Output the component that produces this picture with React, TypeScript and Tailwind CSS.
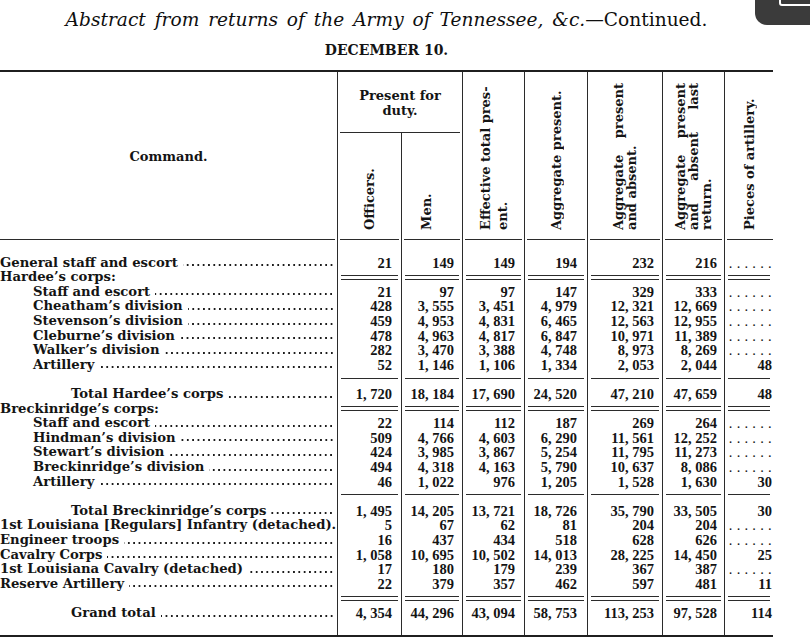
type Row =
  | { kind: "data"; label: string; indent: 0 | 1 | 2; v: (string | null)[]; dots?: boolean }
  | { kind: "group"; label: string }
  | { kind: "rule"; double?: boolean };

const COLS = "grid grid-cols-[338px_64px_61px_62px_63px_75px_62px_48px]";
const LINE = "border-[#2b2b2b]";
const PR = ["pr-[9px]", "pr-[8px]", "pr-[9px]", "pr-[10px]", "pr-[8px]", "pr-[7px]", "pr-px"];
const INDENT = ["pl-0", "pl-[33px]", "pl-[71px]"];

const rows: Row[] = [
  { kind: "data", label: "General staff and escort", indent: 0, v: ["21", "149", "149", "194", "232", "216", null] },
  { kind: "group", label: "Hardee’s corps:" },
  { kind: "data", label: "Staff and escort", indent: 1, v: ["21", "97", "97", "147", "329", "333", null] },
  { kind: "data", label: "Cheatham’s division", indent: 1, v: ["428", "3,555", "3,451", "4,979", "12,321", "12,669", null] },
  { kind: "data", label: "Stevenson’s division", indent: 1, v: ["459", "4,953", "4,831", "6,465", "12,563", "12,955", null] },
  { kind: "data", label: "Cleburne’s division", indent: 1, v: ["478", "4,963", "4,817", "6,847", "10,971", "11,389", null] },
  { kind: "data", label: "Walker’s division", indent: 1, v: ["282", "3,470", "3,388", "4,748", "8,973", "8,269", null] },
  { kind: "data", label: "Artillery", indent: 1, v: ["52", "1,146", "1,106", "1,334", "2,053", "2,044", "48"] },
  { kind: "rule" },
  { kind: "data", label: "Total Hardee’s corps", indent: 2, v: ["1,720", "18,184", "17,690", "24,520", "47,210", "47,659", "48"] },
  { kind: "group", label: "Breckinridge’s corps:" },
  { kind: "data", label: "Staff and escort", indent: 1, v: ["22", "114", "112", "187", "269", "264", null] },
  { kind: "data", label: "Hindman’s division", indent: 1, v: ["509", "4,766", "4,603", "6,290", "11,561", "12,252", null] },
  { kind: "data", label: "Stewart’s division", indent: 1, v: ["424", "3,985", "3,867", "5,254", "11,795", "11,273", null] },
  { kind: "data", label: "Breckinridge’s division", indent: 1, v: ["494", "4,318", "4,163", "5,790", "10,637", "8,086", null] },
  { kind: "data", label: "Artillery", indent: 1, v: ["46", "1,022", "976", "1,205", "1,528", "1,630", "30"] },
  { kind: "rule" },
  { kind: "data", label: "Total Breckinridge’s corps", indent: 2, v: ["1,495", "14,205", "13,721", "18,726", "35,790", "33,505", "30"] },
  { kind: "data", label: "1st Louisiana [Regulars] Infantry (detached).", indent: 0, dots: false, v: ["5", "67", "62", "81", "204", "204", null] },
  { kind: "data", label: "Engineer troops", indent: 0, v: ["16", "437", "434", "518", "628", "626", null] },
  { kind: "data", label: "Cavalry Corps", indent: 0, v: ["1,058", "10,695", "10,502", "14,013", "28,225", "14,450", "25"] },
  { kind: "data", label: "1st Louisiana Cavalry (detached)", indent: 0, v: ["17", "180", "179", "239", "367", "387", null] },
  { kind: "data", label: "Reserve Artillery", indent: 0, v: ["22", "379", "357", "462", "597", "481", "11"] },
  { kind: "rule", double: true },
  { kind: "data", label: "Grand total", indent: 2, v: ["4,354", "44,296", "43,094", "58,753", "113,253", "97,528", "114"] },
];

function Spacer({ h }: { h: string }) {
  return (
    <div className={`${COLS} ${h}`}>
      {[0, 1, 2, 3, 4, 5, 6, 7].map((i) => (
        <div key={i} className={i < 7 ? `border-r ${LINE}` : ""} />
      ))}
    </div>
  );
}

function RuleCells({ double }: { double?: boolean }) {
  return (
    <>
      {[0, 1, 2, 3, 4, 5, 6].map((i) => (
        <div key={i} className={`flex items-center pb-[1px] ${i < 6 ? `border-r ${LINE}` : ""}`}>
          {double ? (
            <div className={`mx-[3px] h-[5px] flex-1 border-y ${LINE}`} />
          ) : (
            <div className="mx-[3px] mb-[2px] h-px flex-1 bg-[#2b2b2b]" />
          )}
        </div>
      ))}
    </>
  );
}

function TableRow({ r }: { r: Row }) {
  if (r.kind === "rule") {
    return (
      <div className={`${COLS} h-[14.6px]`}>
        <div className={`border-r ${LINE}`} />
        <RuleCells double={r.double} />
      </div>
    );
  }
  if (r.kind === "group") {
    return (
      <div className={`${COLS} h-[14.6px] leading-[14.6px]`}>
        <div className={`border-r ${LINE} whitespace-nowrap`}>{r.label}</div>
        <RuleCells double />
      </div>
    );
  }
  return (
    <div className={`${COLS} h-[14.6px] leading-[14.6px]`}>
      <div className={`flex border-r ${LINE} pr-[3px] ${INDENT[r.indent]}`}>
        <span className="whitespace-nowrap">{r.label}</span>
        {r.dots !== false && (
          <span className="ml-[5px] flex-1 bg-[radial-gradient(circle,#1c1c1c_0.85px,transparent_1.25px)] bg-[length:5.33px_4px] bg-[position:right_0_bottom_3px] bg-repeat-x" />
        )}
      </div>
      {r.v.map((v, i) => (
        <div
          key={i}
          className={`text-right font-['Liberation_Serif',serif] text-[14.5px] font-bold ${PR[i]} ${i < 6 ? `border-r ${LINE}` : ""}`}
        >
          {v === null ? (
            <span className="font-normal tracking-[0.3px]">. . . . . .</span>
          ) : (
            v.replace(",", ", ")
          )}
        </div>
      ))}
    </div>
  );
}

function HeadCell({
  className = "",
  line = "mx-[2px]",
  children,
}: {
  className?: string;
  line?: string;
  children: React.ReactNode;
}) {
  return (
    <div className={`flex flex-col ${className}`}>
      <div className="flex flex-1 items-end justify-center pb-[9px]">{children}</div>
      <div className={`h-px bg-[#2b2b2b] ${line}`} />
    </div>
  );
}

function Vert({ h, lead = "leading-[13px]", children }: { h: string; lead?: string; children: React.ReactNode }) {
  return <div className={`[writing-mode:vertical-rl] rotate-180 text-justify ${h} ${lead}`}>{children}</div>;
}

export default function App() {
  return (
    <div className="relative h-[642px] w-[810px] overflow-hidden bg-white font-['DejaVu_Serif',serif] text-[#141414]">
      <div className="w-[773px]">
        <h1 className="pt-[8px] text-center text-[18.6px] leading-[24px] text-[#0f0f0f]">
          <i className="[word-spacing:3px]">Abstract from returns of the Army of Tennessee, &amp;c.</i>—Continued.
        </h1>
        <div className="mt-[9px] text-center text-[14px] font-bold leading-[18px]">DECEMBER 10.</div>

        <div className="mt-[11px] border-t-2 border-[#1f1f1f] text-[13px] font-bold">
          {/* header */}
          <div className={`${COLS} grid-rows-[61px_107px]`}>
            <div className={`row-span-2 flex flex-col border-r ${LINE}`}>
              <div className="flex flex-1 items-center justify-center pt-[2px]">Command.</div>
              <div className="mr-[2px] h-px bg-[#2b2b2b]" />
            </div>
            <div className={`col-span-2 flex flex-col border-r ${LINE}`}>
              <div className="flex flex-1 items-center justify-center pt-[2px] text-center leading-[15px]">
                Present for
                <br />
                duty.
              </div>
              <div className="mx-[2px] h-px bg-[#2b2b2b]" />
            </div>
            <HeadCell className={`row-span-2 border-r ${LINE}`}>
              <Vert h="h-[152px]" lead="leading-[17px]">
                Effective total pres-
                <br />
                ent.
              </Vert>
            </HeadCell>
            <HeadCell className={`row-span-2 border-r ${LINE}`}>
              <Vert h="h-[147px]">Aggregate present.</Vert>
            </HeadCell>
            <HeadCell className={`row-span-2 border-r ${LINE}`}>
              <Vert h="h-[147px]">Aggregate present and absent.</Vert>
            </HeadCell>
            <HeadCell className={`row-span-2 border-r ${LINE}`}>
              <Vert h="h-[147px]">Aggregate present and absent last return.</Vert>
            </HeadCell>
            <HeadCell className="row-span-2" line="ml-[2px]">
              <Vert h="h-[141px]">Pieces of artillery.</Vert>
            </HeadCell>
            <HeadCell className={`border-r ${LINE}`}>
              <Vert h="h-[62px]">Officers.</Vert>
            </HeadCell>
            <HeadCell className={`border-r ${LINE}`}>
              <div className="pr-[12px]">
                <Vert h="h-[36px]">Men.</Vert>
              </div>
            </HeadCell>
          </div>

          {/* body */}
          <div className="text-[13.2px]">
            <Spacer h="h-[15.7px]" />
            {rows.map((r, i) => (
              <TableRow key={i} r={r} />
            ))}
            <Spacer h="h-[14.6px]" />
          </div>
          <div className="h-[2px] bg-[#1f1f1f]" />
        </div>
      </div>

      {/* floating corner control */}
      <div className="absolute right-0 top-0 h-[25px] w-[55px] rounded-bl-[12px] bg-[#3b3b3b]">
        <div className="absolute left-[24px] top-[-3px] h-[9px] w-[40px] rounded-[3px] border-2 border-white" />
      </div>
    </div>
  );
}
